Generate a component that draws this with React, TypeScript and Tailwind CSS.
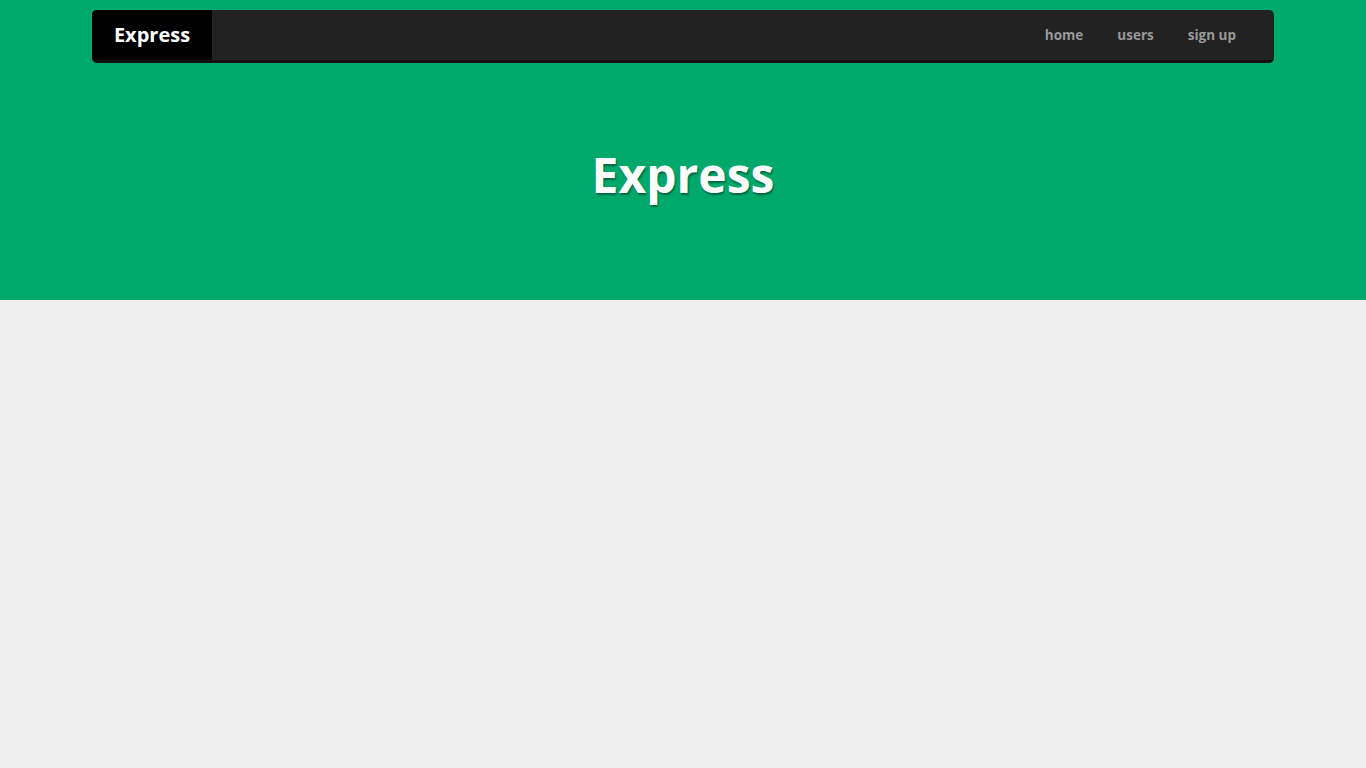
import React from 'react';

const links = ['home', 'users', 'sign up'];

export default function App() {
  return (
    <div className="min-h-screen bg-[#eeeeee] font-['Open_Sans',sans-serif]">
      <header className="h-[300px] bg-[#00a86b] pt-[10px]">
        <nav className="mx-auto flex h-[53px] w-[1182px] items-stretch overflow-hidden rounded-[5px] border-b-[3px] border-[#111] bg-[#222222]">
          <a className="flex w-[120px] items-center justify-center bg-black text-[20px] font-bold text-white">
            Express
          </a>
          <ul className="ml-auto flex items-center pr-[21px]">
            {links.map((l) => (
              <li key={l}>
                <a className="block px-[17px] text-[13.5px] font-bold text-[#999999]">{l}</a>
              </li>
            ))}
          </ul>
        </nav>
        <h1 className="mt-[84px] text-center text-[48px] leading-[56px] font-bold text-white [text-shadow:1px_2px_2px_rgba(0,0,0,0.4)]">
          Express
        </h1>
      </header>
    </div>
  );
}
